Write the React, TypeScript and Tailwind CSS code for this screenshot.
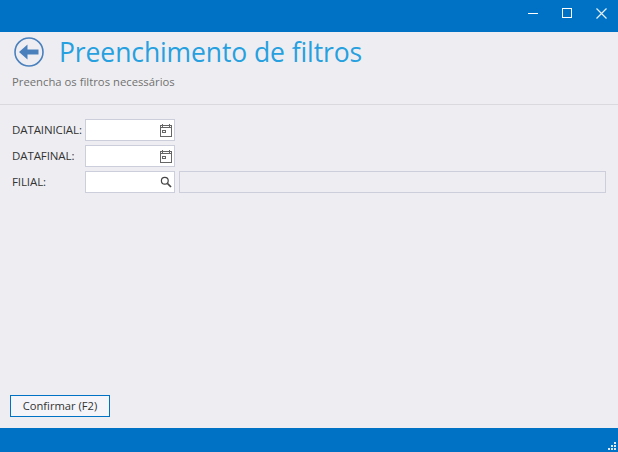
const CalendarIcon = () => (
  <svg width="14" height="15" viewBox="0 0 14 15" fill="none" stroke="#666" strokeWidth="1" shapeRendering="crispEdges">
    <path d="M1.5 2.5h11v11h-11z" />
    <path d="M1.5 4.5h11" />
    <path d="M3.5 0.5v3M10.5 0.5v3" />
    <path d="M3.5 7.5h3v2h-3z" />
  </svg>
);

const SearchIcon = () => (
  <svg width="12" height="12" viewBox="0 0 12 12" fill="none" stroke="#444">
    <circle cx="4.8" cy="4.8" r="3.4" strokeWidth="1.2" />
    <path d="M7.5 7.5L11 11" strokeWidth="1.7" />
  </svg>
);

const BackIcon = () => (
  <svg width="32" height="32" viewBox="0 0 32 32" fill="none">
    <circle cx="16" cy="16" r="14" stroke="#4a81bd" strokeWidth="1.6" />
    <path d="M6 16L14.5 8.5V13.5H25.5V18.5H14.5V23.5Z" fill="#4a81bd" />
  </svg>
);

const Field = ({ label, children }: { label: string; children: React.ReactNode }) => (
  <div className="flex h-[22px] items-center">
    <span className="w-[85px] shrink-0 pl-3 text-[11.5px] tracking-[-0.1px] whitespace-nowrap text-[#333]">{label}</span>
    {children}
  </div>
);

const InputBox = ({ pr, children }: { pr: string; children: React.ReactNode }) => (
  <div className={`flex h-[22px] w-[90px] shrink-0 items-center justify-end border border-[#ccceDb] bg-white ${pr}`}>
    {children}
  </div>
);

const Grip = () => (
  <svg width="10" height="10" viewBox="0 0 10 10" fill="#dfeaf5" shapeRendering="crispEdges">
    <rect x="7" y="0" width="2" height="2" />
    <rect x="4" y="3" width="2" height="2" />
    <rect x="7" y="3" width="2" height="2" />
    <rect x="1" y="6" width="2" height="2" />
    <rect x="4" y="6" width="2" height="2" />
    <rect x="7" y="6" width="2" height="2" />
  </svg>
);

export default function App() {
  return (
    <div className="flex h-[452px] w-[618px] flex-col overflow-hidden bg-[#eeeef2] font-['Open_Sans',sans-serif]">
      <div className="flex h-8 shrink-0 items-start justify-end bg-[#0072c6]">
        <div className="flex h-[26px] w-[34px] items-center justify-center">
          <div className="h-px w-[10px] bg-white" />
        </div>
        <div className="flex h-[26px] w-[34px] items-center justify-center">
          <div className="h-[10px] w-[10px] border border-white" />
        </div>
        <div className="flex h-[26px] w-[34px] items-center justify-center">
          <svg width="11" height="11" viewBox="0 0 11 11" stroke="#e6f1fa" strokeWidth="1.2">
            <path d="M0.5 0.5L10.5 10.5M10.5 0.5L0.5 10.5" />
          </svg>
        </div>
      </div>

      <div className="flex h-[73px] shrink-0 flex-col border-b border-[#d9d9de]">
        <div className="flex items-center pt-[3px] pl-[13px]">
          <BackIcon />
          <h1 className="ml-[14px] text-[26.5px] leading-[34px] font-normal tracking-[-0.1px] whitespace-nowrap text-[#27a0df]">
            Preenchimento de filtros
          </h1>
        </div>
        <p className="mt-[5px] pl-3 text-[11.3px] leading-4 text-[#717171]">Preencha os filtros necessários</p>
      </div>

      <div className="flex flex-1 flex-col gap-1 pt-[14px]">
        <Field label="DATAINICIAL:">
          <InputBox pr="pr-[1px]">
            <CalendarIcon />
          </InputBox>
        </Field>
        <Field label="DATAFINAL:">
          <InputBox pr="pr-[1px]">
            <CalendarIcon />
          </InputBox>
        </Field>
        <Field label="FILIAL:">
          <InputBox pr="pr-[2px]">
            <SearchIcon />
          </InputBox>
          <div className="ml-1 h-[22px] w-[427px] border border-[#ccceDb] bg-[#eeeef2]" />
        </Field>
      </div>

      <div className="shrink-0 pb-[11px] pl-[10px]">
        <button className="flex h-[22px] w-[100px] items-center justify-center border border-[#0072c6] bg-[#f5f5f9] text-[11.2px] text-[#333]">
          Confirmar (F2)
        </button>
      </div>

      <div className="flex h-6 shrink-0 items-end justify-end bg-[#0072c6] pr-[1px]">
        <Grip />
      </div>
    </div>
  );
}
